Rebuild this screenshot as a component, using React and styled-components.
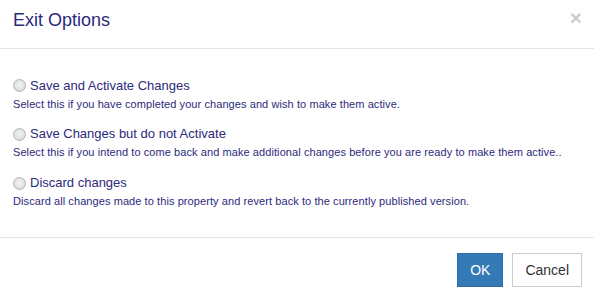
import React from 'react';
import styled, { createGlobalStyle } from 'styled-components';

const GlobalStyle = createGlobalStyle`
    html, body {
        margin: 0;
        padding: 0;
        background: #fff;
    }
    body {
        font-family: "Liberation Sans", Arial, sans-serif;
    }
`

const Modal = styled.div`
    width: 594px;
    background-color: #fff;
    color: #2c2a7c;
`

const ModalHeader = styled.div`
    display: flex;
    justify-content: space-between;
    align-items: flex-start;
    padding: 8px 12px 14px 13px;
    border-bottom: 1px solid #e5e5e5;
`

const Title = styled.h4`
    margin: 0;
    font-size: 18px;
    font-weight: normal;
    line-height: 1.42857;
    color: #2c2a7c;
`

const Close = styled.button`
    margin-top: -1px;
    padding: 0;
    border: 0;
    background: transparent;
    font-family: "Liberation Sans", Arial, sans-serif;
    font-size: 21px;
    font-weight: bold;
    line-height: 1;
    color: #000;
    opacity: 0.2;
    cursor: pointer;
`

const ModalBody = styled.div`
    display: flex;
    flex-direction: column;
    gap: 13.7px;
    padding: 27px 13px 29px;
`

const Option = styled.div`
    display: flex;
    flex-direction: column;
`

const OptionLabel = styled.label`
    display: flex;
    align-items: center;
    gap: 4px;
    font-size: 13px;
    line-height: 20px;
    color: #2c2a7c;
    cursor: pointer;
`

const Radio = styled.span`
    display: inline-block;
    box-sizing: border-box;
    width: 13px;
    height: 13px;
    border-radius: 50%;
    border: 1px solid #b4b4b4;
    background: radial-gradient(circle at 50% 45%, #f4f4f4 0%, #e6e6e6 45%, #cfcfcf 100%);
`

const Description = styled.div`
    margin-top: 1px;
    font-size: 11px;
    line-height: 14px;
    letter-spacing: 0.08px;
    color: #2c2a7c;
`

const ModalFooter = styled.div`
    display: flex;
    justify-content: flex-end;
    gap: 9px;
    padding: 15px 12px;
    border-top: 1px solid #e5e5e5;
`

const Button = styled.button`
    box-sizing: border-box;
    height: 34px;
    padding: 6px 12px;
    font-family: "Liberation Sans", Arial, sans-serif;
    font-size: 14px;
    line-height: 20px;
    border: 1px solid ${props => props.primary ? "#2e6da4" : "#ccc"};
    border-radius: 0;
    background-color: ${props => props.primary ? "#337ab7" : "#fff"};
    color: ${props => props.primary ? "#fff" : "#333"};
    cursor: pointer;
`

const options = [
    {
        label: "Save and Activate Changes",
        text: "Select this if you have completed your changes and wish to make them active."
    },
    {
        label: "Save Changes but do not Activate",
        text: "Select this if you intend to come back and make additional changes before you are ready to make them active.."
    },
    {
        label: "Discard changes",
        text: "Discard all changes made to this property and revert back to the currently published version."
    }
];

export default function App() {
    return (
        <React.Fragment>
            <GlobalStyle />
            <Modal>
                <ModalHeader>
                    <Title>Exit Options</Title>
                    <Close aria-label="Close">×</Close>
                </ModalHeader>
                <ModalBody>
                    {options.map(option => (
                        <Option key={option.label}>
                            <OptionLabel>
                                <Radio />
                                {option.label}
                            </OptionLabel>
                            <Description>{option.text}</Description>
                        </Option>
                    ))}
                </ModalBody>
                <ModalFooter>
                    <Button primary>OK</Button>
                    <Button>Cancel</Button>
                </ModalFooter>
            </Modal>
        </React.Fragment>
    );
}
